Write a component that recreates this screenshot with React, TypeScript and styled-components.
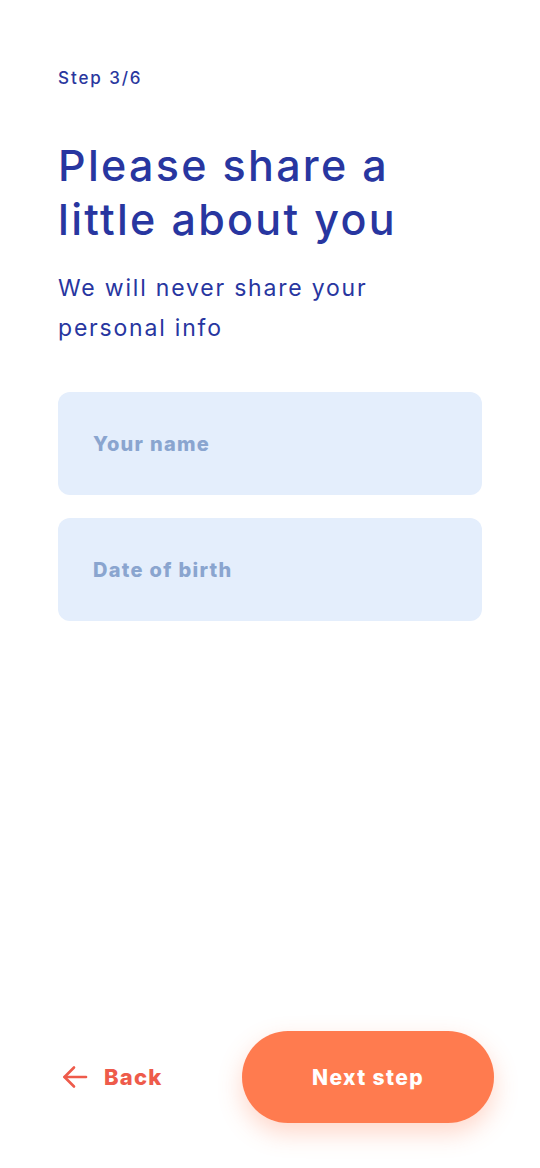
import React from 'react';
import styled, { createGlobalStyle } from 'styled-components';

const GlobalStyle = createGlobalStyle`
  html, body {
    margin: 0;
    padding: 0;
    background: #ffffff;
  }
  body {
    font-family: Inter, 'Open Sans', 'Liberation Sans', sans-serif;
  }
`;

const Screen = styled.div`
  width: 540px;
  height: 1168px;
  box-sizing: border-box;
  display: flex;
  flex-direction: column;
  padding: 66px 46px 45px 58px;
`;

const StepLabel = styled.div`
  font-size: 17px;
  font-weight: 500;
  color: #2a379e;
  line-height: 24px;
  letter-spacing: 1.9px;
`;

const Title = styled.h1`
  margin: 48px 0 0;
  font-size: 43px;
  font-weight: 500;
  line-height: 54px;
  color: #2836a0;
  letter-spacing: 2.3px;
`;

const Subtitle = styled.p`
  margin: 22px 0 0;
  font-size: 23px;
  font-weight: 400;
  line-height: 40px;
  color: #2836a0;
  max-width: 340px;
  letter-spacing: 1.8px;
`;

const Fields = styled.div`
  display: flex;
  flex-direction: column;
  gap: 23px;
  margin-top: 44px;
  margin-right: 12px;
`;

const Field = styled.input`
  height: 103px;
  box-sizing: border-box;
  border: none;
  border-radius: 12px;
  background: #e4eefc;
  padding: 0 35px;
  font-family: inherit;
  font-size: 20px;
  font-weight: 800;
  letter-spacing: 1.3px;
  color: #2836a0;
  outline: none;

  &::placeholder {
    color: #8aa5cf;
  }
`;

const Spacer = styled.div`
  flex: 1;
`;

const Footer = styled.div`
  display: flex;
  align-items: center;
  justify-content: space-between;
`;

const BackButton = styled.button`
  display: flex;
  align-items: center;
  gap: 16px;
  border: none;
  background: none;
  padding: 0 0 0 4px;
  font-family: inherit;
  font-size: 22px;
  font-weight: 800;
  letter-spacing: 1.2px;
  color: #ee5b4b;
  cursor: pointer;
`;

const NextButton = styled.button`
  width: 252px;
  height: 92px;
  border: none;
  border-radius: 46px;
  background: #ff7b4f;
  color: #ffffff;
  font-family: inherit;
  font-size: 21px;
  font-weight: 800;
  letter-spacing: 1.4px;
  box-shadow: 0 10px 24px rgba(255, 123, 79, 0.3);
  cursor: pointer;
`;

const ArrowIcon = () => (
  <svg width="26" height="26" viewBox="0 0 26 26" fill="none" stroke="currentColor" strokeWidth="2.6" strokeLinecap="round" strokeLinejoin="round">
    <path d="M24 13H2.5" />
    <path d="M12 3.5L2.5 13L12 22.5" />
  </svg>
);

const App = () => {
  return (
    <>
      <GlobalStyle />
      <Screen>
        <StepLabel>Step 3/6</StepLabel>
        <Title>
          Please share a
          <br />
          little about you
        </Title>
        <Subtitle>We will never share your personal info</Subtitle>
        <Fields>
          <Field placeholder="Your name" />
          <Field placeholder="Date of birth" />
        </Fields>
        <Spacer />
        <Footer>
          <BackButton>
            <ArrowIcon />
            Back
          </BackButton>
          <NextButton>Next step</NextButton>
        </Footer>
      </Screen>
    </>
  );
};

export default App;
